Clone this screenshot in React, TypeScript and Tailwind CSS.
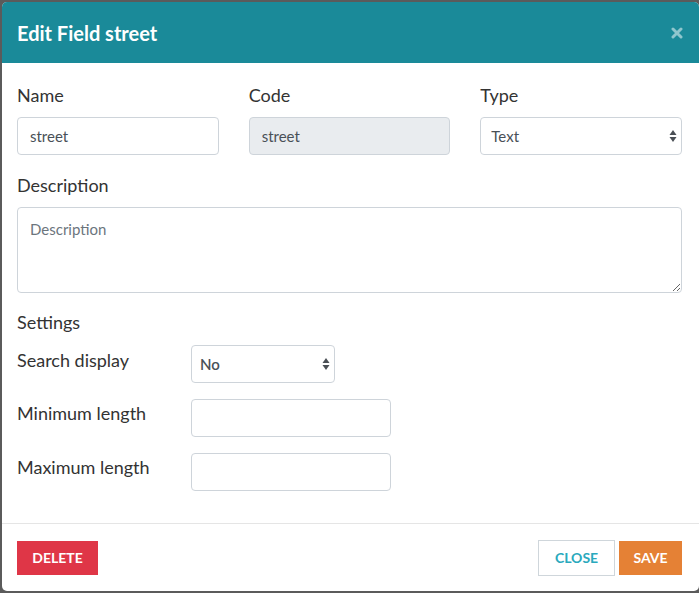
import { useState } from "react";

const font = { fontFamily: "Lato, 'Noto Sans', sans-serif" };

function Arrows() {
  return (
    <svg width="8" height="14" viewBox="0 0 8 14" className="pointer-events-none absolute right-[5px] top-1/2 -translate-y-1/2">
      <path d="M4 1 L7.5 6 H0.5 Z" fill="#4a4f55" />
      <path d="M4 13 L7.5 8 H0.5 Z" fill="#4a4f55" />
    </svg>
  );
}

function Field({ label, children }: { label: string; children: React.ReactNode }) {
  return (
    <div className="flex flex-col">
      <label className="text-[18px] leading-[22px] text-[#333]">{label}</label>
      <div className="mt-[11px]">{children}</div>
    </div>
  );
}

const baseInput =
  "h-[38px] rounded-[4px] border border-[#ced4da] px-3 text-[15px] text-[#495057] outline-none";

export default function App() {
  const [name, setName] = useState("street");
  const [type, setType] = useState("Text");
  const [search, setSearch] = useState("No");

  return (
    <div className="h-[593px] w-[699px] overflow-hidden bg-[#5b5b5b] pl-[2px] pt-[2px]" style={font}>
      <div className="flex h-[589px] w-[697px] flex-col overflow-hidden rounded-[5px] bg-white">
        <header className="flex h-[61px] shrink-0 items-center justify-between bg-[#1a8a99] pl-[15px] pr-[16px]">
          <h1 className="text-[20px] font-bold text-white">Edit Field street</h1>
          <button type="button" className="text-[#8fc6cd]">
            <svg width="12" height="12" viewBox="0 0 12 12">
              <path d="M2 2 L10 10 M10 2 L2 10" stroke="currentColor" strokeWidth="3" strokeLinecap="round" />
            </svg>
          </button>
        </header>

        <div className="flex-1 pl-[15px] pr-[17px] pt-[21px]">
          <div className="grid grid-cols-3 gap-[30px]">
            <Field label="Name">
              <input className={baseInput + " w-full bg-white"} value={name} onChange={(e) => setName(e.target.value)} />
            </Field>
            <Field label="Code">
              <input className={baseInput + " w-full bg-[#e9ecef]"} value="street" readOnly />
            </Field>
            <Field label="Type">
              <div className="relative">
                <select
                  className={baseInput + " w-full appearance-none bg-white pl-[10px]"}
                  value={type}
                  onChange={(e) => setType(e.target.value)}
                >
                  <option>Text</option>
                  <option>Number</option>
                  <option>Date</option>
                </select>
                <Arrows />
              </div>
            </Field>
          </div>

          <div className="mt-[19px]">
            <Field label="Description">
              <textarea
                className="block h-[86px] w-full resize-y rounded-[4px] border border-[#ced4da] px-3 py-[10px] text-[15px] text-[#495057] outline-none placeholder:text-[#6c757d]"
                placeholder="Description"
              />
            </Field>
          </div>

          <p className="mt-[18px] text-[18px] leading-[22px] text-[#333]">Settings</p>

          <div className="mt-[12px] flex flex-col gap-[16px]">
            <div className="flex items-start">
              <span className="w-[174px] pt-[4px] text-[18px] leading-[22px] text-[#333]">Search display</span>
              <div className="relative w-[144px]">
                <select
                  className={baseInput + " w-full appearance-none bg-white pl-[8px] font-semibold text-[#333]"}
                  value={search}
                  onChange={(e) => setSearch(e.target.value)}
                >
                  <option>No</option>
                  <option>Yes</option>
                </select>
                <Arrows />
              </div>
            </div>
            <div className="flex items-start">
              <span className="w-[174px] pt-[3px] text-[18px] leading-[22px] text-[#333]">Minimum length</span>
              <input className={baseInput + " w-[200px] bg-white"} />
            </div>
            <div className="flex items-start">
              <span className="w-[174px] pt-[3px] text-[18px] leading-[22px] text-[#333]">Maximum length</span>
              <input className={baseInput + " w-[200px] bg-white"} />
            </div>
          </div>
        </div>

        <footer className="flex h-[68px] shrink-0 items-center justify-between border-t border-[#e5e5e5] pl-[15px] pr-[17px]">
          <button type="button" className="h-[34px] w-[81px] bg-[#df3647] text-[14px] font-bold text-white">
            DELETE
          </button>
          <div className="flex gap-[4px]">
            <button
              type="button"
              className="h-[36px] w-[77px] border border-[#cfd6db] bg-white text-[14px] font-bold text-[#2aa9bd]"
            >
              CLOSE
            </button>
            <button type="button" className="h-[34px] w-[63px] self-center bg-[#e58135] text-[14px] font-bold text-white">
              SAVE
            </button>
          </div>
        </footer>
      </div>
    </div>
  );
}
